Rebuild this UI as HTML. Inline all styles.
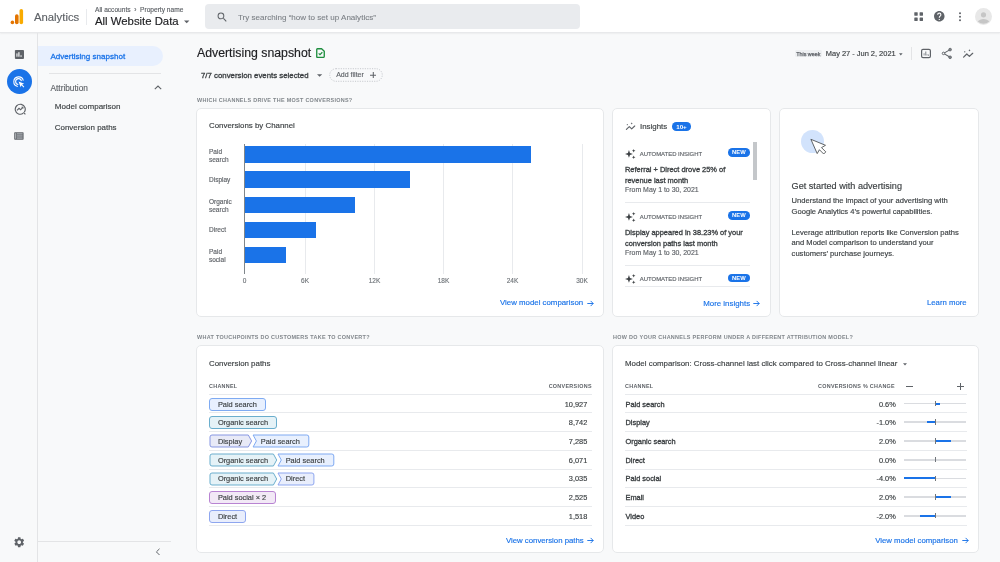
<!DOCTYPE html>
<html><head><meta charset="utf-8">
<style>
*{box-sizing:border-box;margin:0;padding:0}
html,body{width:1000px;height:562px;overflow:hidden}
body{will-change:transform}
body{position:relative;background:#f8f9fa;font-family:"Liberation Sans",sans-serif;color:#202124;-webkit-text-stroke:0.15px currentColor}
.a{position:absolute;white-space:nowrap}
.hdr{position:absolute;left:0;top:0;width:1000px;height:33px;background:#fff;border-bottom:1px solid #e8e9eb;box-shadow:0 1px 1.5px rgba(60,64,67,.06)}
.card{position:absolute;margin-left:-0.4px;background:#fff;border:1px solid #e6e8ea;border-radius:5px}
.blue{color:#1a73e8}
.sec{font-size:5.45px;line-height:8px;font-weight:bold;color:#80868b;letter-spacing:0.3px}
.ylab{position:absolute;left:209px;font-size:6.5px;line-height:8px;color:#5f6368}
.xlab{position:absolute;top:276px;width:40px;text-align:center;font-size:6.5px;line-height:10px;color:#70757a}
.th{font-size:5.4px;line-height:8px;color:#5f6368;letter-spacing:.3px;font-weight:bold}
.num{font-size:7.4px;line-height:10px;color:#3c4043}
.mname{font-size:7.4px;line-height:10px;color:#3c4043;-webkit-text-stroke:0.32px #3c4043}
.chip{height:13px;border:1px solid;border-radius:3px;font-size:7.4px;line-height:12.8px;padding-left:7.7px;color:#3c4043}
.link{font-size:7.8px;line-height:10px}
.ct{height:13px;font-size:7.4px;line-height:14.8px;color:#3c4043}
[style*="font-weight:bold"],.th,.sec{-webkit-text-stroke:0}
</style></head><body>
<!-- HEADER -->
<div class="hdr">
  <svg class="a" style="left:10px;top:9px" width="14" height="16" viewBox="0 0 14 16">
    <rect x="9.5" y="0" width="3.6" height="15.2" rx="1.8" fill="#f9ab00"/>
    <rect x="5" y="5.2" width="3.6" height="10" rx="1.8" fill="#e37400"/>
    <circle cx="2.4" cy="13.4" r="1.8" fill="#e37400"/>
  </svg>
  <div class="a" style="left:34px;top:10px;font-size:11.3px;line-height:14px;color:#5f6368">Analytics</div>
  <div class="a" style="left:86px;top:9px;width:1px;height:16px;background:#e8eaed"></div>
  <div class="a" style="left:95px;top:6px;font-size:6.6px;line-height:8px;color:#5f6368">All accounts &nbsp;›&nbsp; Property name</div>
  <div class="a" style="left:95px;top:14px;font-size:11.35px;line-height:14px;color:#202124">All Website Data</div>
  <svg class="a" style="left:183.5px;top:20px" width="6" height="4" viewBox="0 0 6 4"><path d="M0 0.5h5.4L2.7 3.3z" fill="#5f6368"/></svg>
  <div class="a" style="left:205px;top:4px;width:375px;height:25px;background:#e9ebee;border-radius:4px"></div>
  <svg class="a" style="left:215.5px;top:10.5px" width="12.5" height="12.5" viewBox="0 0 24 24"><path fill="#5f6368" d="M15.5 14h-.79l-.28-.27A6.471 6.471 0 0 0 16 9.5 6.5 6.5 0 1 0 9.5 16c1.61 0 3.09-.59 4.23-1.57l.27.28v.79l5 4.99L20.49 19l-4.99-5zm-6 0C7.01 14 5 11.99 5 9.5S7.01 5 9.5 5 14 7.01 14 9.5 11.99 14 9.5 14z"/></svg>
  <div class="a" style="left:238px;top:12.5px;font-size:8.05px;line-height:10px;color:#7a7f84;-webkit-text-stroke:0.08px #7a7f84">Try searching “how to set up Analytics”</div>
  <!-- apps -->
  <svg class="a" style="left:914px;top:12px" width="10" height="10" viewBox="0 0 10 10" fill="#5f6368">
    <rect x="0.3" y="0.3" width="3.4" height="3.4" rx=".4"/><rect x="5.6" y="0.3" width="3.4" height="3.4" rx=".4"/>
    <rect x="0.3" y="5.6" width="3.4" height="3.4" rx=".4"/><rect x="5.6" y="5.6" width="3.4" height="3.4" rx=".4"/>
  </svg>
  <svg class="a" style="left:933.2px;top:10.2px" width="12.6" height="12.6" viewBox="0 0 24 24"><path fill="#5f6368" d="M12 2C6.48 2 2 6.48 2 12s4.48 10 10 10 10-4.48 10-10S17.52 2 12 2zm1 17h-2v-2h2v2zm2.07-7.75l-.9.92C13.45 12.9 13 13.5 13 15h-2v-.5c0-1.1.45-2.1 1.17-2.83l1.24-1.26c.37-.36.59-.86.59-1.41 0-1.1-.9-2-2-2s-2 .9-2 2H8c0-2.21 1.79-4 4-4s4 1.79 4 4c0 .88-.36 1.68-.93 2.25z"/></svg>
  <svg class="a" style="left:958px;top:12px" width="4" height="10" viewBox="0 0 4 10" fill="#5f6368"><circle cx="2" cy="1.2" r="1"/><circle cx="2" cy="4.7" r="1"/><circle cx="2" cy="8.2" r="1"/></svg>
  <svg class="a" style="left:975px;top:8px" width="17" height="17" viewBox="0 0 17 17">
    <circle cx="8.5" cy="8.5" r="8.5" fill="#e8e8e8"/>
    <circle cx="8.5" cy="6.8" r="2.6" fill="#c6c6c6"/>
    <path d="M2.8 13.5c1.2-1.8 3.3-2.6 5.7-2.6s4.5.8 5.7 2.6A8.5 8.5 0 0 1 2.8 13.5z" fill="#c6c6c6"/>
  </svg>
</div>

<!-- RAIL -->
<div class="a" style="left:37px;top:33px;width:1px;height:529px;background:#e3e4e6"></div>

<!-- NAV -->
<div class="a" style="left:38px;top:46px;width:125px;height:20px;background:#e8f0fe;border-radius:0 10px 10px 0"></div>
<div class="a blue" style="left:50.5px;top:51.7px;font-size:8.05px;line-height:10px;-webkit-text-stroke:0.28px #1a73e8">Advertising snapshot</div>
<div class="a" style="left:48.5px;top:72.7px;width:112px;height:1px;background:#e3e4e6"></div>
<div class="a" style="left:50.5px;top:82.7px;font-size:8.3px;line-height:10px;color:#5f6368">Attribution</div>
<div class="a" style="left:54.8px;top:101.7px;font-size:8.05px;line-height:10px;color:#3c4043">Model comparison</div>
<div class="a" style="left:54.8px;top:122.7px;font-size:7.95px;line-height:10px;color:#3c4043">Conversion paths</div>
<div class="a" style="left:37px;top:541px;width:134px;height:1px;background:#e3e4e6"></div>

<!-- MAIN TITLE -->
<div class="a" style="left:197px;top:46px;font-size:12.3px;line-height:15px;color:#202124">Advertising snapshot</div>
<div class="a" style="left:201px;top:70.5px;font-size:7.84px;line-height:10px;-webkit-text-stroke:0.32px #3c4043;color:#3c4043">7/7 conversion events selected</div>
<div class="a sec" style="left:197px;top:96px">WHICH CHANNELS DRIVE THE MOST CONVERSIONS?</div>
<div class="a sec" style="left:197px;top:333.3px">WHAT TOUCHPOINTS DO CUSTOMERS TAKE TO CONVERT?</div>
<div class="a sec" style="left:613px;top:333.3px">HOW DO YOUR CHANNELS PERFORM UNDER A DIFFERENT ATTRIBUTION MODEL?</div>

<!-- CARDS -->
<div class="card" style="left:196.4px;top:108px;width:407.6px;height:208.5px"></div>
<div class="card" style="left:612.5px;top:108px;width:158.6px;height:208.5px"></div>
<div class="card" style="left:779.5px;top:108px;width:200px;height:208.5px"></div>
<div class="card" style="left:196.4px;top:345px;width:407.6px;height:208px"></div>
<div class="card" style="left:612.5px;top:345px;width:366.5px;height:208px"></div>


<!-- CHART CARD CONTENT -->
<div class="a" style="left:209px;top:121.4px;font-size:7.89px;line-height:10px;color:#3c4043">Conversions by Channel</div>
<div style="position:absolute;left:304.5px;top:143.5px;width:1px;height:130px;background:#e8eaed"></div>
<div style="position:absolute;left:374px;top:143.5px;width:1px;height:130px;background:#e8eaed"></div>
<div style="position:absolute;left:443px;top:143.5px;width:1px;height:130px;background:#e8eaed"></div>
<div style="position:absolute;left:512px;top:143.5px;width:1px;height:130px;background:#e8eaed"></div>
<div style="position:absolute;left:581.5px;top:143.5px;width:1px;height:130px;background:#e8eaed"></div>
<div style="position:absolute;left:244.5px;top:146.2px;width:286px;height:16.6px;background:#1a73e8"></div>
<div style="position:absolute;left:244.5px;top:171.3px;width:165.8px;height:16.6px;background:#1a73e8"></div>
<div style="position:absolute;left:244.5px;top:196.6px;width:110.6px;height:16.6px;background:#1a73e8"></div>
<div style="position:absolute;left:244.5px;top:221.8px;width:71px;height:16.6px;background:#1a73e8"></div>
<div style="position:absolute;left:244.5px;top:246.5px;width:41.3px;height:16.6px;background:#1a73e8"></div>
<div style="position:absolute;left:244px;top:144px;width:1px;height:129.5px;background:#80868b"></div>
<div class="ylab" style="top:147.5px">Paid<br>search</div>
<div class="ylab" style="top:176.3px">Display</div>
<div class="ylab" style="top:197.5px">Organic<br>search</div>
<div class="ylab" style="top:226.4px">Direct</div>
<div class="ylab" style="top:248.3px">Paid<br>social</div>
<div class="xlab" style="left:224.5px">0</div>
<div class="xlab" style="left:285px">6K</div>
<div class="xlab" style="left:354.5px">12K</div>
<div class="xlab" style="left:423.5px">18K</div>
<div class="xlab" style="left:492.5px">24K</div>
<div class="xlab" style="left:562px">30K</div>
<div class="a blue" style="left:500px;top:298.3px;font-size:7.85px;line-height:10px">View model comparison</div>
<svg class="a" style="left:587.3px;top:299.8px" width="7" height="7" viewBox="0 0 7 7" fill="none" stroke="#1a73e8" stroke-width="0.95"><path d="M0.3 3.5H6.2M3.6 0.9L6.2 3.5 3.6 6.1"/></svg>

<!-- INSIGHTS CARD -->
<svg class="a" style="left:624px;top:121px" width="14" height="10" viewBox="624 121 14 10">
  <path d="M626.4 129.4L629.3 126.6 631.7 128.8 634.7 126" fill="none" stroke="#5f6368" stroke-width="1.15" stroke-linecap="round" stroke-linejoin="round"/>
  <rect x="626.8" y="124.1" width="1.1" height="1.1" fill="#6f7479"/>
  <path d="M631.7 122.4L632.1 123 632.7 123.4 632.1 123.8 631.7 124.4 631.3 123.8 630.7 123.4 631.3 123z" fill="#5f6368"/>
</svg>
<div class="a" style="left:640px;top:121.5px;font-size:7.9px;line-height:10px;color:#3c4043">Insights</div>
<div class="a" style="left:671.8px;top:122.2px;width:19.4px;height:8.6px;border-radius:4.3px;background:#1a73e8;color:#fff;font-size:6.2px;line-height:9.3px;font-weight:bold;text-align:center">10+</div>
<svg class="a" style="left:625.3px;top:148.8px" width="11" height="10" viewBox="0 0 10 9" fill="#3c4043">
  <path d="M3.6 0.8L4.5 3.5 7.2 4.4 4.5 5.3 3.6 8 2.7 5.3 0 4.4 2.7 3.5z"/>
  <path d="M7.9 0L8.35 1.15 9.5 1.6 8.35 2.05 7.9 3.2 7.45 2.05 6.3 1.6 7.45 1.15z"/>
  <path d="M7.9 5.8L8.35 6.95 9.5 7.4 8.35 7.85 7.9 9 7.45 7.85 6.3 7.4 7.45 6.95z"/>
</svg>
<div class="a" style="left:639.8px;top:149.8px;font-size:5.93px;line-height:8px;color:#5f6368">AUTOMATED INSIGHT</div>
<div class="a" style="left:728px;top:148.20000000000002px;width:21.9px;height:8.7px;border-radius:4.35px;background:#1a73e8;color:#fff;font-size:5.8px;line-height:9.5px;font-weight:bold;text-align:center;letter-spacing:.2px">NEW</div>
<svg class="a" style="left:625.3px;top:211.6px" width="11" height="10" viewBox="0 0 10 9" fill="#3c4043">
  <path d="M3.6 0.8L4.5 3.5 7.2 4.4 4.5 5.3 3.6 8 2.7 5.3 0 4.4 2.7 3.5z"/>
  <path d="M7.9 0L8.35 1.15 9.5 1.6 8.35 2.05 7.9 3.2 7.45 2.05 6.3 1.6 7.45 1.15z"/>
  <path d="M7.9 5.8L8.35 6.95 9.5 7.4 8.35 7.85 7.9 9 7.45 7.85 6.3 7.4 7.45 6.95z"/>
</svg>
<div class="a" style="left:639.8px;top:212.6px;font-size:5.93px;line-height:8px;color:#5f6368">AUTOMATED INSIGHT</div>
<div class="a" style="left:728px;top:211.0px;width:21.9px;height:8.7px;border-radius:4.35px;background:#1a73e8;color:#fff;font-size:5.8px;line-height:9.5px;font-weight:bold;text-align:center;letter-spacing:.2px">NEW</div>
<svg class="a" style="left:625.3px;top:274.1px" width="11" height="10" viewBox="0 0 10 9" fill="#3c4043">
  <path d="M3.6 0.8L4.5 3.5 7.2 4.4 4.5 5.3 3.6 8 2.7 5.3 0 4.4 2.7 3.5z"/>
  <path d="M7.9 0L8.35 1.15 9.5 1.6 8.35 2.05 7.9 3.2 7.45 2.05 6.3 1.6 7.45 1.15z"/>
  <path d="M7.9 5.8L8.35 6.95 9.5 7.4 8.35 7.85 7.9 9 7.45 7.85 6.3 7.4 7.45 6.95z"/>
</svg>
<div class="a" style="left:639.8px;top:275.1px;font-size:5.93px;line-height:8px;color:#5f6368">AUTOMATED INSIGHT</div>
<div class="a" style="left:728px;top:273.5px;width:21.9px;height:8.7px;border-radius:4.35px;background:#1a73e8;color:#fff;font-size:5.8px;line-height:9.5px;font-weight:bold;text-align:center;letter-spacing:.2px">NEW</div>

<div class="a" style="left:625px;top:165.3px;font-size:7.45px;line-height:10.3px;-webkit-text-stroke:0.32px #3c4043;color:#3c4043">Referral + Direct drove 25% of<br>revenue last month</div>
<div class="a" style="left:625px;top:184.5px;font-size:6.94px;line-height:9px;color:#5f6368">From May 1 to 30, 2021</div>
<div class="a" style="left:625px;top:202px;width:125px;height:1px;background:#e8eaed"></div>
<div class="a" style="left:625px;top:228.3px;font-size:7.45px;line-height:10.3px;-webkit-text-stroke:0.32px #3c4043;color:#3c4043">Display appeared in 38.23% of your<br>conversion paths last month</div>
<div class="a" style="left:625px;top:247.5px;font-size:6.94px;line-height:9px;color:#5f6368">From May 1 to 30, 2021</div>
<div class="a" style="left:625px;top:265px;width:125px;height:1px;background:#e8eaed"></div>
<div class="a" style="left:625px;top:286px;width:125px;height:1px;background:#e8eaed"></div>
<div class="a" style="left:753.2px;top:141.6px;width:4px;height:38px;background:#c4c7ca"></div>
<div class="a blue" style="left:703.2px;top:298.5px;font-size:7.9px;line-height:10px">More insights</div>
<svg class="a" style="left:753.3px;top:300px" width="7" height="7" viewBox="0 0 7 7" fill="none" stroke="#1a73e8" stroke-width="0.95"><path d="M0.3 3.5H6.2M3.6 0.9L6.2 3.5 3.6 6.1"/></svg>

<!-- GET STARTED CARD -->
<div class="a" style="left:801.1px;top:130px;width:22.8px;height:22.8px;border-radius:50%;background:#d2e3fc"></div>
<svg class="a" style="left:800px;top:130px" width="30" height="30" viewBox="800 130 30 30">
  <path d="M810.9 139.3L825.5 145.3 821.5 147.6 825.8 151.9 823.7 154 819.4 149.7 817.2 153.6z" fill="#fff" stroke="#3c4043" stroke-width=".8" stroke-linejoin="round"/>
</svg>
<div class="a" style="left:791.6px;top:180.5px;font-size:9.12px;line-height:11px;color:#3c4043">Get started with advertising</div>
<div class="a" style="left:791.6px;top:196.1px;font-size:7.6px;line-height:10.7px;color:#3c4043">Understand the impact of your advertising with<br>Google Analytics 4’s powerful capabilities.</div>
<div class="a" style="left:791.6px;top:227.8px;font-size:7.58px;line-height:10.4px;color:#3c4043">Leverage attribution reports like Conversion paths<br>and Model comparison to understand your<br>customers’ purchase journeys.</div>
<div class="a blue" style="left:927px;top:297.9px;font-size:7.75px;line-height:10px">Learn more</div>

<!-- CONVERSION PATHS CARD -->
<div class="a" style="left:209px;top:358.8px;font-size:7.9px;line-height:10px;color:#3c4043">Conversion paths</div>
<div class="a th" style="left:209px;top:382.2px">CHANNEL</div>
<div class="a th" style="left:491.8px;top:382.2px;width:100px;text-align:right;">CONVERSIONS</div>
<div class="a" style="left:209px;top:394px;width:382.5px;height:1px;background:#e8eaed"></div>
<div class="a" style="left:625px;top:394px;width:342px;height:1px;background:#e8eaed"></div>
<div class="a" style="left:209px;top:412.4px;width:382.5px;height:1px;background:#e8eaed"></div>
<div class="a" style="left:625px;top:412.4px;width:342px;height:1px;background:#e8eaed"></div>
<div class="a" style="left:209px;top:431.4px;width:382.5px;height:1px;background:#e8eaed"></div>
<div class="a" style="left:625px;top:431.4px;width:342px;height:1px;background:#e8eaed"></div>
<div class="a" style="left:209px;top:450.1px;width:382.5px;height:1px;background:#e8eaed"></div>
<div class="a" style="left:625px;top:450.1px;width:342px;height:1px;background:#e8eaed"></div>
<div class="a" style="left:209px;top:468.8px;width:382.5px;height:1px;background:#e8eaed"></div>
<div class="a" style="left:625px;top:468.8px;width:342px;height:1px;background:#e8eaed"></div>
<div class="a" style="left:209px;top:487.4px;width:382.5px;height:1px;background:#e8eaed"></div>
<div class="a" style="left:625px;top:487.4px;width:342px;height:1px;background:#e8eaed"></div>
<div class="a" style="left:209px;top:506.2px;width:382.5px;height:1px;background:#e8eaed"></div>
<div class="a" style="left:625px;top:506.2px;width:342px;height:1px;background:#e8eaed"></div>
<div class="a" style="left:209px;top:524.9px;width:382.5px;height:1px;background:#e8eaed"></div>
<div class="a" style="left:625px;top:524.9px;width:342px;height:1px;background:#e8eaed"></div>
<div class="a num" style="left:487.3px;top:399.5px;width:100px;text-align:right">10,927</div>
<div class="a num" style="left:487.3px;top:417.9px;width:100px;text-align:right">8,742</div>
<div class="a num" style="left:487.3px;top:436.9px;width:100px;text-align:right">7,285</div>
<div class="a num" style="left:487.3px;top:455.6px;width:100px;text-align:right">6,071</div>
<div class="a num" style="left:487.3px;top:474.3px;width:100px;text-align:right">3,035</div>
<div class="a num" style="left:487.3px;top:492.9px;width:100px;text-align:right">2,525</div>
<div class="a num" style="left:487.3px;top:511.7px;width:100px;text-align:right">1,518</div>
<div class="a chip" style="left:209.2px;top:397.5px;width:56.6px;background:#e8f0fe;border-color:#7eaaf2">Paid search</div>
<div class="a chip" style="left:209.2px;top:415.9px;width:67.6px;background:#e5f2f7;border-color:#6aaecd">Organic search</div>
<svg class="a" style="left:208.7px;top:434.4px" width="101.8" height="14" viewBox="208.7 434.4 101.8 14"><path d="M211.7 435.4 H248.0 L251.3 441.4 L248.0 447.4 H211.7 Q209.7 447.4 209.7 445.4 V437.4 Q209.7 435.4 211.7 435.4Z" fill="#e8eaf7" stroke="#8797e2" stroke-width="1" stroke-linejoin="round"/><path d="M252.8 435.4 H306.5 Q308.5 435.4 308.5 437.4 V445.4 Q308.5 447.4 306.5 447.4 H252.8 L256.1 441.4Z" fill="#e8f0fe" stroke="#7eaaf2" stroke-width="1" stroke-linejoin="round"/></svg>
<div class="a ct" style="left:217.9px;top:434.9px">Display</div>
<div class="a ct" style="left:260.8px;top:434.9px">Paid search</div>
<svg class="a" style="left:208.7px;top:453.1px" width="126.8" height="14" viewBox="208.7 453.1 126.8 14"><path d="M211.7 454.1 H273.1 L276.4 460.1 L273.1 466.1 H211.7 Q209.7 466.1 209.7 464.1 V456.1 Q209.7 454.1 211.7 454.1Z" fill="#e5f2f7" stroke="#6aaecd" stroke-width="1" stroke-linejoin="round"/><path d="M277.7 454.1 H331.5 Q333.5 454.1 333.5 456.1 V464.1 Q333.5 466.1 331.5 466.1 H277.7 L281.0 460.1Z" fill="#e8f0fe" stroke="#7eaaf2" stroke-width="1" stroke-linejoin="round"/></svg>
<div class="a ct" style="left:217.9px;top:453.6px">Organic search</div>
<div class="a ct" style="left:285.7px;top:453.6px">Paid search</div>
<svg class="a" style="left:208.7px;top:471.8px" width="106.9" height="14" viewBox="208.7 471.8 106.9 14"><path d="M211.7 472.8 H273.1 L276.4 478.8 L273.1 484.8 H211.7 Q209.7 484.8 209.7 482.8 V474.8 Q209.7 472.8 211.7 472.8Z" fill="#e5f2f7" stroke="#6aaecd" stroke-width="1" stroke-linejoin="round"/><path d="M277.7 472.8 H311.6 Q313.6 472.8 313.6 474.8 V482.8 Q313.6 484.8 311.6 484.8 H277.7 L281.0 478.8Z" fill="#e9eefc" stroke="#8ea6ef" stroke-width="1" stroke-linejoin="round"/></svg>
<div class="a ct" style="left:217.9px;top:472.3px">Organic search</div>
<div class="a ct" style="left:285.7px;top:472.3px">Direct</div>
<div class="a chip" style="left:209.2px;top:490.9px;width:66.6px;background:#f2e9f6;border-color:#b883d2">Paid social × 2</div>
<div class="a chip" style="left:209.2px;top:509.7px;width:37.2px;background:#e9eefc;border-color:#8ea6ef">Direct</div>
<div class="a blue link" style="left:505.9px;top:535.6px">View conversion paths</div>
<svg class="a" style="left:587px;top:537px" width="7" height="7" viewBox="0 0 7 7" fill="none" stroke="#1a73e8" stroke-width="0.95"><path d="M0.3 3.5H6.2M3.6 0.9L6.2 3.5 3.6 6.1"/></svg>

<!-- MODEL COMPARISON CARD -->
<div class="a" style="left:625px;top:358.8px;font-size:7.9px;line-height:10px;color:#3c4043">Model comparison: Cross-channel last click compared to Cross-channel linear</div>
<svg class="a" style="left:902.5px;top:362.5px" width="4" height="3" viewBox="0 0 4 3"><path d="M0 0.3h4L2 2.6z" fill="#5f6368"/></svg>
<div class="a th" style="left:625px;top:382.2px">CHANNEL</div>
<div class="a th" style="left:795px;top:382.2px;width:100px;text-align:right;">CONVERSIONS % CHANGE</div>
<div class="a" style="left:905.5px;top:385.6px;width:7px;height:1.2px;background:#5f6368"></div>
<div class="a" style="left:957.2px;top:385.6px;width:7px;height:1.2px;background:#5f6368"></div>
<div class="a" style="left:960.1px;top:382.7px;width:1.2px;height:7px;background:#5f6368"></div>
<div class="a mname" style="left:625.5px;top:399.5px">Paid search</div>
<div class="a num" style="left:795.8px;top:399.5px;width:100px;text-align:right">0.6%</div>
<div class="a" style="left:903.6px;top:402.7px;width:62.3px;height:1.8px;background:#dadce0"></div>
<div class="a" style="left:935.2px;top:402.5px;width:4.71px;height:2.2px;background:#1a73e8"></div>
<div class="a" style="left:934.7px;top:401.0px;width:1px;height:5.2px;background:#70757a"></div>
<div class="a mname" style="left:625.5px;top:417.9px">Display</div>
<div class="a num" style="left:795.8px;top:417.9px;width:100px;text-align:right">-1.0%</div>
<div class="a" style="left:903.6px;top:421.1px;width:62.3px;height:1.8px;background:#dadce0"></div>
<div class="a" style="left:927.35px;top:420.9px;width:7.85px;height:2.2px;background:#1a73e8"></div>
<div class="a" style="left:934.7px;top:419.4px;width:1px;height:5.2px;background:#70757a"></div>
<div class="a mname" style="left:625.5px;top:436.9px">Organic search</div>
<div class="a num" style="left:795.8px;top:436.9px;width:100px;text-align:right">2.0%</div>
<div class="a" style="left:903.6px;top:440.1px;width:62.3px;height:1.8px;background:#dadce0"></div>
<div class="a" style="left:935.2px;top:439.9px;width:15.7px;height:2.2px;background:#1a73e8"></div>
<div class="a" style="left:934.7px;top:438.4px;width:1px;height:5.2px;background:#70757a"></div>
<div class="a mname" style="left:625.5px;top:455.6px">Direct</div>
<div class="a num" style="left:795.8px;top:455.6px;width:100px;text-align:right">0.0%</div>
<div class="a" style="left:903.6px;top:458.8px;width:62.3px;height:1.8px;background:#dadce0"></div>
<div class="a" style="left:934.7px;top:457.1px;width:1px;height:5.2px;background:#70757a"></div>
<div class="a mname" style="left:625.5px;top:474.3px">Paid social</div>
<div class="a num" style="left:795.8px;top:474.3px;width:100px;text-align:right">-4.0%</div>
<div class="a" style="left:903.6px;top:477.5px;width:62.3px;height:1.8px;background:#dadce0"></div>
<div class="a" style="left:903.8px;top:477.3px;width:31.4px;height:2.2px;background:#1a73e8"></div>
<div class="a" style="left:934.7px;top:475.8px;width:1px;height:5.2px;background:#70757a"></div>
<div class="a mname" style="left:625.5px;top:492.9px">Email</div>
<div class="a num" style="left:795.8px;top:492.9px;width:100px;text-align:right">2.0%</div>
<div class="a" style="left:903.6px;top:496.1px;width:62.3px;height:1.8px;background:#dadce0"></div>
<div class="a" style="left:935.2px;top:495.9px;width:15.7px;height:2.2px;background:#1a73e8"></div>
<div class="a" style="left:934.7px;top:494.4px;width:1px;height:5.2px;background:#70757a"></div>
<div class="a mname" style="left:625.5px;top:511.7px">Video</div>
<div class="a num" style="left:795.8px;top:511.7px;width:100px;text-align:right">-2.0%</div>
<div class="a" style="left:903.6px;top:514.9px;width:62.3px;height:1.8px;background:#dadce0"></div>
<div class="a" style="left:919.5px;top:514.7px;width:15.7px;height:2.2px;background:#1a73e8"></div>
<div class="a" style="left:934.7px;top:513.2px;width:1px;height:5.2px;background:#70757a"></div>
<div class="a blue link" style="left:875.2px;top:535.5px">View model comparison</div>
<svg class="a" style="left:961.5px;top:537px" width="7" height="7" viewBox="0 0 7 7" fill="none" stroke="#1a73e8" stroke-width="0.95"><path d="M0.3 3.5H6.2M3.6 0.9L6.2 3.5 3.6 6.1"/></svg>

<!-- RAIL ICONS -->
<svg class="a" style="left:14px;top:49px" width="11" height="11" viewBox="14 49 11 11">
  <rect x="14.9" y="49.9" width="9.1" height="9.1" rx="0.9" fill="#5f6368"/>
  <rect x="16.4" y="53.4" width="1.1" height="3.3" fill="#f8f9fa"/><rect x="18.3" y="52.2" width="1.2" height="4.5" fill="#f8f9fa"/><rect x="20.4" y="55.4" width="1.3" height="1.3" fill="#f8f9fa"/>
</svg>
<div class="a" style="left:6.8px;top:69.1px;width:24.8px;height:24.8px;border-radius:50%;background:#1a73e8"></div>
<svg class="a" style="left:12px;top:74.5px" width="14" height="14" viewBox="0 0 14 14" fill="none" stroke="#fff" stroke-width="1.05">
  <path d="M11.3 5.6A4.8 4.8 0 1 0 5.8 11.4"/>
  <path d="M9.4 6.1A2.9 2.9 0 1 0 6.3 9.4"/>
  <path d="M6.6 6.6L12.2 8.7 10.1 9.5 12.3 11.7 11.6 12.4 9.4 10.2 8.6 12.3z" fill="#fff" stroke="none"/>
</svg>
<svg class="a" style="left:13.5px;top:102.8px" width="12" height="12" viewBox="0 0 12 12" fill="none" stroke="#5f6368" stroke-width="1.15">
  <path d="M10.3 9.2A5 5 0 1 0 9.2 10.3"/>
  <path d="M3 7.4L5 5.4 6.6 6.8 8.8 4.4"/>
  <path d="M7.6 4.2H9V5.6" stroke-width="1"/>
  <path d="M9.4 9.4L11.4 11.4" stroke-width="1.2"/>
</svg>
<svg class="a" style="left:14.2px;top:131.8px" width="10" height="8" viewBox="0 0 10 8">
  <rect x="0.2" y="0.2" width="9.4" height="7.6" rx="0.7" fill="#5f6368"/>
  <rect x="3" y="1.2" width="5.6" height="1.3" fill="#a9adb1"/><rect x="3" y="3.3" width="5.6" height="1.3" fill="#a9adb1"/><rect x="3" y="5.4" width="5.6" height="1.3" fill="#a9adb1"/>
  <rect x="1" y="1.2" width="1.3" height="5.5" fill="#a9adb1"/>
</svg>
<svg class="a" style="left:12.9px;top:535.6px" width="12.4" height="12.4" viewBox="0 0 24 24"><path fill="#5f6368" d="M19.14 12.94c.04-.3.06-.61.06-.94 0-.32-.02-.64-.07-.94l2.03-1.58c.18-.14.23-.41.12-.61l-1.92-3.32c-.12-.22-.37-.29-.59-.22l-2.39.96c-.5-.38-1.03-.7-1.62-.94l-.36-2.54c-.04-.24-.24-.41-.48-.41h-3.84c-.24 0-.43.17-.47.41l-.36 2.54c-.59.24-1.13.57-1.62.94l-2.39-.96c-.22-.08-.47 0-.59.22L2.74 8.87c-.12.21-.08.47.12.61l2.03 1.58c-.05.3-.09.63-.09.94s.02.64.07.94l-2.03 1.58c-.18.14-.23.41-.12.61l1.92 3.32c.12.22.37.29.59.22l2.39-.96c.5.38 1.03.7 1.62.94l.36 2.54c.05.24.24.41.48.41h3.84c.24 0 .44-.17.47-.41l.36-2.54c.59-.24 1.13-.56 1.62-.94l2.39.96c.22.08.47 0 .59-.22l1.92-3.32c.12-.22.07-.47-.12-.61l-2.01-1.58zM12 15.6c-1.98 0-3.6-1.62-3.6-3.6s1.62-3.6 3.6-3.6 3.6 1.62 3.6 3.6-1.62 3.6-3.6 3.6z"/></svg>
<svg class="a" style="left:155px;top:548px" width="6" height="8" viewBox="0 0 6 8" fill="none" stroke="#5f6368" stroke-width="1"><path d="M4.5 0.8L1.4 3.9 4.5 7"/></svg>
<svg class="a" style="left:153.5px;top:84.5px" width="8" height="5" viewBox="0 0 8 5" fill="none" stroke="#5f6368" stroke-width="1.1"><path d="M0.8 4.2L4 1 7.2 4.2"/></svg>

<!-- TITLE EXTRAS -->
<svg class="a" style="left:316.2px;top:48px" width="9.2" height="10.1" viewBox="0 0 10 11" fill="none" stroke="#1e8e3e" stroke-width="1.45">
  <path d="M1.5 0.8H6.1L9 3.6V9.2Q9 10.2 8 10.2H1.5Q0.8 10.2 0.8 9.4V1.6Q0.8 0.8 1.5 0.8z" stroke-linejoin="round"/>
  <path d="M2.9 5.9L4.3 7.2 6.9 4.6" stroke-width="1.3"/>
</svg>
<svg class="a" style="left:316.8px;top:73.8px" width="6" height="3" viewBox="0 0 6 3"><path d="M0 0.2h5.2L2.6 2.8z" fill="#5f6368"/></svg>
<svg class="a" style="left:329px;top:68px" width="54" height="14" viewBox="0 0 54 14"><rect x="0.7" y="0.7" width="52.6" height="12.6" rx="6.3" fill="none" stroke="#b9bdc1" stroke-width="0.8" stroke-dasharray="1.1 1.3"/></svg>
<div class="a" style="left:336.2px;top:70px;font-size:7.0px;line-height:10px;color:#5f6368">Add filter</div>
<svg class="a" style="left:369.7px;top:71.5px" width="6.6" height="6.6" viewBox="0 0 7 7" stroke="#5f6368" stroke-width="1.1"><path d="M3.5 0V7M0 3.5H7"/></svg>

<!-- DATE RANGE -->
<div class="a" style="left:794.8px;top:50px;width:27.4px;height:7.2px;background:#eef0f2;border-radius:1.5px"></div>
<div class="a" style="left:796.2px;top:49.6px;font-size:5.4px;line-height:8px;color:#5f6368;-webkit-text-stroke:0.25px #5f6368">This week</div>
<div class="a" style="left:825.8px;top:48.5px;font-size:7.45px;line-height:10px;color:#3c4043">May 27 - Jun 2, 2021</div>
<svg class="a" style="left:898.6px;top:52.9px" width="4" height="3" viewBox="0 0 4 3"><path d="M0 0.3h3.6L1.8 2.4z" fill="#5f6368"/></svg>
<div class="a" style="left:911.2px;top:47px;width:1px;height:12.6px;background:#e3e4e6"></div>
<svg class="a" style="left:918px;top:45px" width="40" height="16" viewBox="918 45 40 16">
  <rect x="921.6" y="49.4" width="8.8" height="8.3" rx="1.4" fill="none" stroke="#5f6368" stroke-width="1.2"/>
  <path d="M923.5 55.6V53.3H924.7V55.6zM925 55.6V51.4H926.4V55.6zM926.6 55.6V54.2H927.7V55.6z" fill="#a0a4a8"/>
  <rect x="928" y="54.6" width="0.9" height="1" fill="#5f6368"/>
  <path d="M943.6 53.4L950.1 49.6M943.6 53.4L950.1 57.3" stroke="#5f6368" stroke-width="1.1"/>
  <circle cx="943.5" cy="53.4" r="1.25" fill="#f8f9fa" stroke="#5f6368" stroke-width="1"/>
  <circle cx="950.1" cy="49.6" r="1.35" fill="#7f8488" stroke="#5f6368" stroke-width=".8"/>
  <circle cx="950.1" cy="57.3" r="1.35" fill="#7f8488" stroke="#5f6368" stroke-width=".8"/>
</svg>
<svg class="a" style="left:958px;top:45px" width="20" height="16" viewBox="958 45 20 16">
  <path d="M963.6 57.1L966.8 54 969.4 56.4 972.7 53.3" fill="none" stroke="#5f6368" stroke-width="1.25" stroke-linecap="round" stroke-linejoin="round"/>
  <rect x="964.1" y="51.2" width="1.2" height="1.2" fill="#6f7479"/>
  <path d="M969.5 49.3L969.95 50 970.6 50.4 969.95 50.8 969.5 51.5 969.05 50.8 968.4 50.4 969.05 50z" fill="#5f6368"/>
</svg>
</body></html>
